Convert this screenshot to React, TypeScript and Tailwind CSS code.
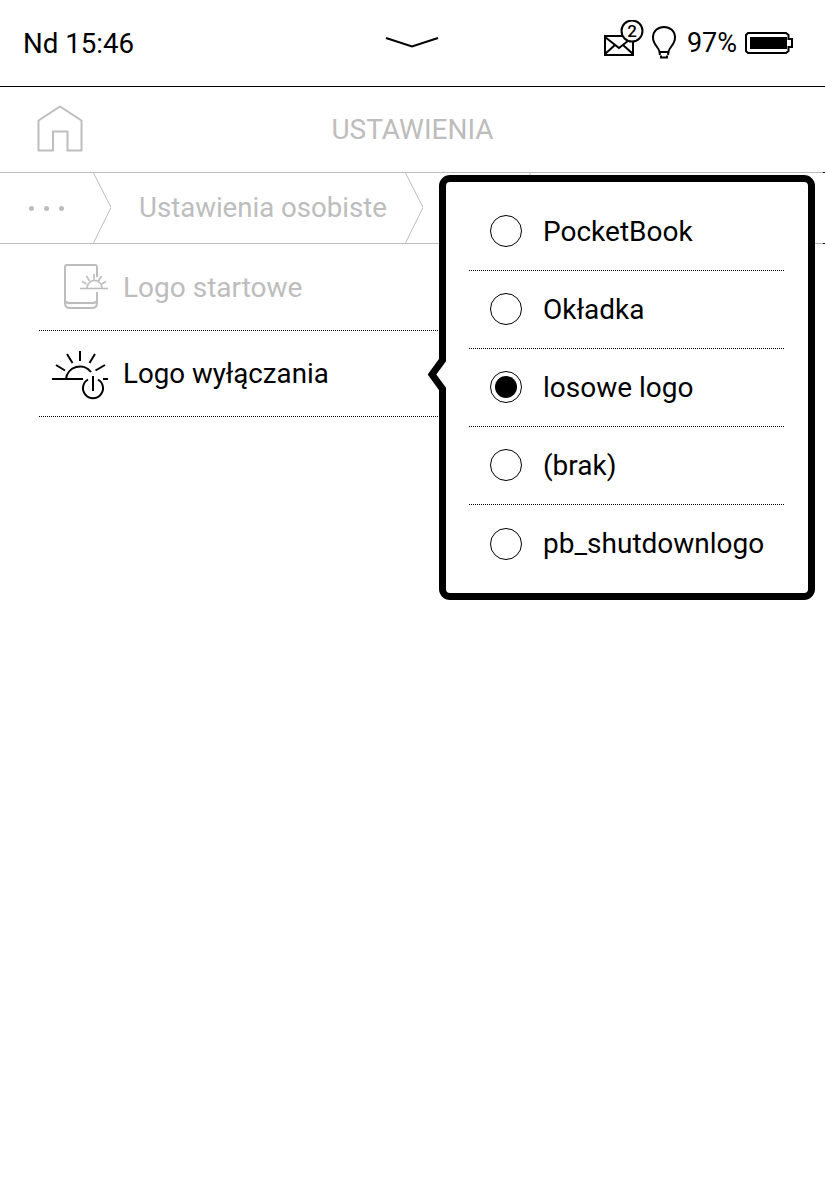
const GRAY = "#bdbdbd";

function Chevron() {
  return (
    <svg width="18" height="70" viewBox="0 0 18 70" className="shrink-0" fill="none">
      <path d="M0.5 0 L18 34.5 L0.5 70" stroke={GRAY} strokeWidth="1" />
    </svg>
  );
}

function Radio({ on }: { on?: boolean }) {
  return (
    <span className="w-[32px] h-[32px] mb-[1px] rounded-full border border-black shrink-0 flex items-center justify-center">
      {on && <span className="w-[22px] h-[22px] rounded-full bg-black" />}
    </span>
  );
}

function Option({ label, on, last }: { label: string; on?: boolean; last?: boolean }) {
  return (
    <div className={"h-[78px] ml-[23px] mr-[24px] pl-[21px] flex items-center gap-[21px] text-[28px] text-black " + (last ? "" : "border-b border-dotted border-black")}>
      <Radio on={on} />
      <span>{label}</span>
    </div>
  );
}

export default function App() {
  return (
    <div className="relative w-[825px] h-[1200px] bg-white overflow-hidden font-['Roboto',sans-serif]">
      {/* status bar */}
      <div className="relative h-[87px] border-b border-black flex items-center pl-[23px] pr-[31px] justify-between">
        <span className="text-[27.7px] text-black mt-[1px]">Nd 15:46</span>
        <svg className="absolute left-[380px] top-[30px]" width="64" height="24" viewBox="0 0 64 24" fill="none">
          <path d="M6 8 L32 16.5 L58 8" stroke="#000" strokeWidth="2" />
        </svg>
        <div className="flex items-center">
          <svg width="48" height="44" viewBox="0 0 48 44" fill="none" className="mr-[6px] mt-[-2px]">
            <rect x="8" y="16" width="28" height="19" stroke="#000" strokeWidth="2" />
            <path d="M8 17 L22 28 L36 17 M8 34 L18 25 M36 34 L26 25" stroke="#000" strokeWidth="2" />
            <circle cx="35" cy="11" r="10.5" fill="#fff" stroke="#000" strokeWidth="2" />
            <text x="35" y="17" textAnchor="middle" fontSize="17" fontWeight="500" fontFamily="Roboto, sans-serif" fill="#000">2</text>
          </svg>
          <svg width="26" height="36" viewBox="0 0 26 36" fill="none" className="mr-[10px] mt-[-1px]">
            <path d="M9 30 L8.5 27 C8 22 2 20 2 12.5 C2 6 7 2 13 2 C19 2 24 6 24 12.5 C24 20 18 22 17.5 27 L17 30 M9 27 H17 M10 30.5 V32.5 H16 V30.5" stroke="#000" strokeWidth="2" />
          </svg>
          <span className="text-[27px] text-black mr-[8px] mt-[1px]">97%</span>
          <svg width="49" height="22" viewBox="0 0 49 22" fill="none">
            <path d="M3 1 H41 L43.5 3 V7 H47 V15 H43.5 V19 L41 21 H3 L1 19 V3 Z" stroke="#000" strokeWidth="2" />
            <rect x="5" y="5" width="37" height="12" fill="#000" />
          </svg>
        </div>
      </div>

      {/* title bar */}
      <div className="relative h-[86px] border-b border-[#bdbdbd] flex items-center justify-center">
        <svg className="absolute left-[37px] top-[18px]" width="46" height="47" viewBox="0 0 46 47" fill="none">
          <path d="M1.5 15.5 L23 1.5 L44.5 15.5 V45.5 H30.5 V26.5 H16 V45.5 H1.5 Z" stroke={GRAY} strokeWidth="2" strokeLinejoin="round" />
        </svg>
        <span className="text-[28px] text-[#bdbdbd] mt-[1px]">USTAWIENIA</span>
        <span className="absolute right-0 bottom-[-1px] w-[2px] h-[1px] bg-black" />
      </div>

      {/* breadcrumb */}
      <div className="relative h-[71px] border-b border-[#bdbdbd] flex items-start">
        <div className="w-[93px] h-[70px] shrink-0 flex items-center pl-[29px] gap-[10px]">
          <span className="w-[5px] h-[5px] rounded-full bg-[#bdbdbd]" />
          <span className="w-[5px] h-[5px] rounded-full bg-[#bdbdbd]" />
          <span className="w-[5px] h-[5px] rounded-full bg-[#bdbdbd]" />
        </div>
        <Chevron />
        <div className="w-[294px] h-[70px] shrink-0 flex items-center pl-[28px] text-[27.6px] text-[#bdbdbd]">
          Ustawienia osobiste
        </div>
        <Chevron />
        <div className="w-[106px] shrink-0" />
        <Chevron />
        <span className="absolute right-0 bottom-[-1px] w-[2px] h-[1px] bg-black" />
      </div>

      {/* list */}
      <div className="pl-[39px] w-[600px]">
        <div className="h-[87px] border-b border-dotted border-black flex items-center">
          <svg width="84" height="60" viewBox="0 0 84 60" fill="none" className="shrink-0">
            <g stroke={GRAY} strokeWidth="2" strokeLinejoin="round" transform="translate(-39 -257)">
              <path d="M97 277 V267 Q97 265 95 265 H67 Q65 265 65 267 V303 Q65 308 70 308 H92 Q97 308 97 303 V292" />
              <path d="M65 301 Q66 303 70 303 H92 Q96 303 97 301" />
            </g>
            <g stroke={GRAY} strokeWidth="1.6" transform="translate(-39 -257)">
              <path d="M80 288.5 H108" />
              <path d="M87 288 A7.5 7.5 0 0 1 102 288" />
              <path d="M94 274 V280 M86.5 276 L89.5 281 M101.5 276 L98.5 281 M82 281.5 L86.5 284 M106 281.5 L101.5 284" />
            </g>
          </svg>
          <span className="text-[28px] text-[#bdbdbd] mt-[1px]">Logo startowe</span>
        </div>
        <div className="h-[86px] border-b border-dotted border-black flex items-center">
          <svg width="84" height="61" viewBox="0 0 84 61" fill="none" className="shrink-0">
            <g stroke="#000" strokeWidth="2" transform="translate(-39 -343)">
              <path d="M52 379 H83" />
              <path d="M66 379 A14 14 0 0 1 91 372" />
              <path d="M80 351 V361 M67 354 L72.5 363 M95 354 L89.5 363 M56 365 L65 370.5 M105 365 L95.5 370.5 M103 379 H108" />
              <path d="M88 379.5 A10 10 0 1 0 98 379.5" />
              <path d="M93 376 V391" />
            </g>
          </svg>
          <span className="text-[27.7px] text-black mt-[1px]">Logo wyłączania</span>
        </div>
      </div>

      {/* popup */}
      <div className="absolute left-[439px] top-[175px] w-[376px] h-[425px] bg-white border-[7px] border-black rounded-[11px] pt-[11px]">
        <Option label="PocketBook" />
        <Option label="Okładka" />
        <Option label="losowe logo" on />
        <Option label="(brak)" />
        <Option label="pb_shutdownlogo" last />
      </div>
      <svg className="absolute left-[420px] top-[345px]" width="30" height="60" viewBox="0 0 30 60" fill="none">
        <path d="M27 12 L16 29.5 L27 47 Z" fill="#fff" />
        <path d="M22.5 5 V15 L12 29.5 L22.5 44 V55" stroke="#000" strokeWidth="7" strokeLinejoin="miter" />
      </svg>
    </div>
  );
}
